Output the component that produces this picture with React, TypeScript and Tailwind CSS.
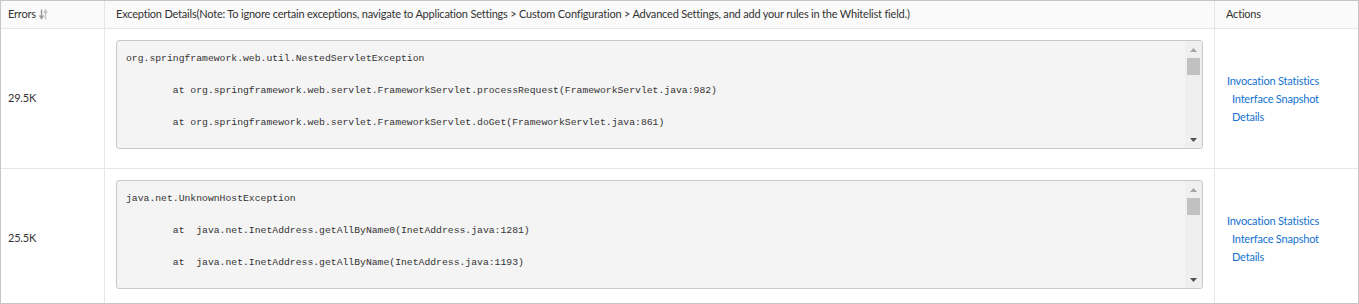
import React from "react";

const font = { fontFamily: 'Lato, "Open Sans", sans-serif' };
const mono = { fontFamily: '"Liberation Mono", "DejaVu Sans Mono", monospace' };

function SortIcon() {
  return (
    <svg width="9" height="11" viewBox="0 0 9 11" className="inline-block ml-[3px] align-[-1px]">
      <path d="M2.5 0.5 V8.5 M0.5 6.5 L2.5 9.5 L4.5 6.5" stroke="#9a9a9a" strokeWidth="1.4" fill="none" />
      <path d="M6.5 10.5 V2 M4.8 4 L6.5 1 L8.2 4" stroke="#c4c4c4" strokeWidth="1.4" fill="none" />
    </svg>
  );
}

function CodeBox({ lines }: { lines: string[] }) {
  return (
    <div className="flex h-[109px] w-full rounded-[3px] border border-[#c9c9c9] bg-[#f4f4f4] overflow-hidden">
      <div
        className="flex-1 pl-[9px] pt-[10px] text-[9.75px] leading-[16px] tracking-normal text-[#333] whitespace-pre overflow-hidden"
        style={{ ...mono, tabSize: 8 }}
      >
        {lines.join("\n")}
      </div>
      <div className="w-[17px] bg-[#efefef] flex flex-col items-center">
        <div className="h-[17px] flex items-center justify-center">
          <svg width="7" height="4" viewBox="0 0 7 4"><path d="M0 4 L3.5 0 L7 4 Z" fill="#a3a3a3" /></svg>
        </div>
        <div className="w-[13px] h-[17px] bg-[#c1c1c1]" />
        <div className="flex-1" />
        <div className="h-[17px] flex items-center justify-center">
          <svg width="7" height="4" viewBox="0 0 7 4"><path d="M0 0 L3.5 4 L7 0 Z" fill="#505050" /></svg>
        </div>
      </div>
    </div>
  );
}

function Row({ value, lines, last }: { value: string; lines: string[]; last?: boolean }) {
  return (
    <div
      className={`grid grid-cols-[104px_1110px_1fr] shrink-0 border-[#e6e6e6] ${last ? "h-[139px]" : "h-[140px] border-b"}`}
    >
      <div className="border-r border-[#e6e6e6] flex items-center pl-[7px] text-[#333]">{value}</div>
      <div className="border-r border-[#e6e6e6] pl-[11px] pr-[11px] pt-[11px]">
        <CodeBox lines={lines} />
      </div>
      <div className="flex flex-col justify-center pl-[12px] leading-[18px] text-[#1472d0]">
        <span>Invocation Statistics</span>
        <span className="pl-[5px]">Interface Snapshot</span>
        <span className="pl-[5px]">Details</span>
      </div>
    </div>
  );
}

export default function App() {
  return (
    <div className="w-[1359px] h-[304px] bg-white overflow-hidden text-[11px] tracking-[-0.2px]" style={font}>
      <div className="flex flex-col border border-[#c6c6c6] h-[304px] overflow-hidden">
        <div className="grid grid-cols-[104px_1110px_1fr] shrink-0 h-[28px] bg-[#fafafa] border-b border-[#e6e6e6] text-[#333]">
          <div className="border-r border-[#e6e6e6] flex items-center pl-[7px]">
            Errors
            <SortIcon />
          </div>
          <div className="border-r border-[#e6e6e6] flex items-center pl-[11px] whitespace-nowrap overflow-hidden">
            Exception Details(Note: To ignore certain exceptions, navigate to Application Settings &gt; Custom Configuration &gt; Advanced Settings, and add your rules in the Whitelist field.)
          </div>
          <div className="flex items-center pl-[11px]">Actions</div>
        </div>
        <Row
          value="29.5K"
          lines={[
            "org.springframework.web.util.NestedServletException",
            "",
            "\tat org.springframework.web.servlet.FrameworkServlet.processRequest(FrameworkServlet.java:982)",
            "",
            "\tat org.springframework.web.servlet.FrameworkServlet.doGet(FrameworkServlet.java:861)",
            "",
          ]}
        />
        <Row
          value="25.5K"
          last
          lines={[
            "java.net.UnknownHostException",
            "",
            "\tat  java.net.InetAddress.getAllByName0(InetAddress.java:1281)",
            "",
            "\tat  java.net.InetAddress.getAllByName(InetAddress.java:1193)",
            "",
          ]}
        />
      </div>
    </div>
  );
}
